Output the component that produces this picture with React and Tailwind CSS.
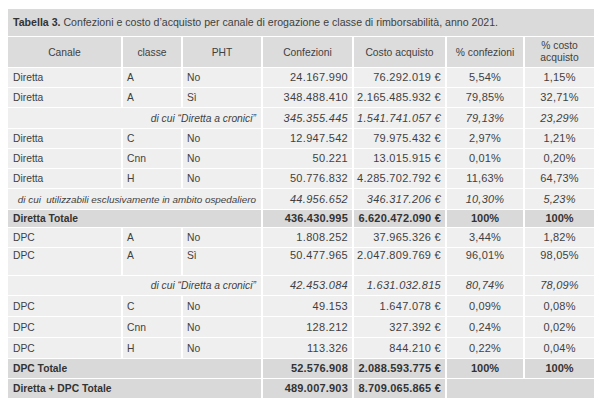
import React from "react";

const rows = [
  { type: "row", h: 19, c: ["Diretta", "A", "No", "24.167.990", "76.292.019 €", "5,54%", "1,15%"] },
  { type: "row", h: 19, c: ["Diretta", "A", "Sì", "348.488.410", "2.165.485.932 €", "79,85%", "32,71%"] },
  { type: "sub", h: 20, c: ["di cui \u201cDiretta a cronici\u201d", "345.355.445", "1.541.741.057 €", "79,13%", "23,29%"] },
  { type: "row", h: 19, c: ["Diretta", "C", "No", "12.947.542", "79.975.432 €", "2,97%", "1,21%"] },
  { type: "row", h: 19, c: ["Diretta", "Cnn", "No", "50.221", "13.015.915 €", "0,01%", "0,20%"] },
  { type: "row", h: 19, c: ["Diretta", "H", "No", "50.776.832", "4.285.702.792 €", "11,63%", "64,73%"] },
  { type: "sub", h: 20, small: true, c: ["di cui  utilizzabili esclusivamente in ambito ospedaliero", "44.956.652", "346.317.206 €", "10,30%", "5,23%"] },
  { type: "total", h: 17, c: ["Diretta Totale", "436.430.995", "6.620.472.090 €", "100%", "100%"] },
  { type: "row", h: 19, c: ["DPC", "A", "No", "1.808.252", "37.965.326 €", "3,44%", "1,82%"] },
  { type: "row", h: 27, top: true, c: ["DPC", "A", "Sì", "50.477.965", "2.047.809.769 €", "96,01%", "98,05%"] },
  { type: "sub", h: 19, c: ["di cui \u201cDiretta a cronici\u201d", "42.453.084", "1.631.032.815", "80,74%", "78,09%"] },
  { type: "row", h: 20, c: ["DPC", "C", "No", "49.153", "1.647.078 €", "0,09%", "0,08%"] },
  { type: "row", h: 20, c: ["DPC", "Cnn", "No", "128.212", "327.392 €", "0,24%", "0,02%"] },
  { type: "row", h: 20, c: ["DPC", "H", "No", "113.326", "844.210 €", "0,22%", "0,04%"] },
  { type: "total", h: 19, c: ["DPC Totale", "52.576.908", "2.088.593.775 €", "100%", "100%"] },
  { type: "grand", h: 19, c: ["Diretta + DPC Totale", "489.007.903", "8.709.065.865 €"] },
];

function DataRow({ row }) {
  const va = row.top ? "align-top pt-[1px]" : "align-middle";
  const cell = `bg-[#efefef] ${va}`;
  const num = `${cell} text-right pr-[4px] text-[11px] tracking-[0.3px]`;
  const pct = `${cell} text-center text-[11px] tracking-[0.2px]`;

  if (row.type === "row") {
    const [canale, classe, pht, conf, costo, pc, pcc] = row.c;
    return (
      <tr style={{ height: row.h }}>
        <td className={`${cell} pl-[5px]`}>{canale}</td>
        <td className={`${cell} pl-[4px]`}>{classe}</td>
        <td className={`${cell} pl-[4px]`}>{pht}</td>
        <td className={num}>{conf}</td>
        <td className={num}>{costo}</td>
        <td className={pct}>{pc}</td>
        <td className={pct}>{pcc}</td>
      </tr>
    );
  }

  if (row.type === "sub") {
    const [label, conf, costo, pc, pcc] = row.c;
    return (
      <tr style={{ height: row.h }} className="italic">
        <td
          colSpan={3}
          className={`${cell} text-right pr-[5px] whitespace-pre ${row.small ? "text-[9.9px]" : ""}`}
        >
          {label}
        </td>
        <td className={num}>{conf}</td>
        <td className={num}>{costo}</td>
        <td className={pct}>{pc}</td>
        <td className={pct}>{pcc}</td>
      </tr>
    );
  }

  const tot = "bg-[#d9d9d9] align-middle font-bold text-[#333]";
  const [label, conf, costo, pc, pcc] = row.c;
  return (
    <tr style={{ height: row.h }}>
      <td colSpan={3} className={`${tot} pl-[5px]`}>{label}</td>
      <td className={`${tot} text-right pr-[4px] text-[11px] tracking-[0.2px]`}>{conf}</td>
      <td className={`${tot} text-right pr-[4px] text-[11px] tracking-[0.2px]`}>{costo}</td>
      {row.type === "grand" ? (
        <td colSpan={2} className={tot}></td>
      ) : (
        <>
          <td className={`${tot} text-center text-[11px]`}>{pc}</td>
          <td className={`${tot} text-center text-[11px]`}>{pcc}</td>
        </>
      )}
    </tr>
  );
}

export default function App() {
  return (
    <div className="w-[610px] h-[415px] bg-white pl-[6px] pt-[8px] text-[10.3px] leading-[13px] text-[#3f3f3f] font-['Liberation_Sans',Arial,sans-serif]">
      <table className="w-[590px] table-fixed border-separate border-spacing-x-[2px] border-spacing-y-[1px]">
        <colgroup>
          <col style={{ width: 113 }} />
          <col style={{ width: 58 }} />
          <col style={{ width: 78 }} />
          <col style={{ width: 89 }} />
          <col style={{ width: 91 }} />
          <col style={{ width: 76 }} />
          <col style={{ width: 69 }} />
        </colgroup>
        <tbody>
          <tr className="h-[27px]">
            <td colSpan={7} className="bg-[#dadada] pl-[5px] align-middle text-[10.6px] whitespace-nowrap">
              <span className="font-bold text-[#333]">Tabella 3.</span> Confezioni e costo d’acquisto per canale di erogazione e classe di rimborsabilità, anno 2021.
            </td>
          </tr>
          <tr className="h-[30px] text-center">
            <td className="bg-[#dcdcdc]">Canale</td>
            <td className="bg-[#dcdcdc]">classe</td>
            <td className="bg-[#dcdcdc]">PHT</td>
            <td className="bg-[#dcdcdc]">Confezioni</td>
            <td className="bg-[#dcdcdc]">Costo acquisto</td>
            <td className="bg-[#dcdcdc]">% confezioni</td>
            <td className="bg-[#dcdcdc] leading-[12px]">% costo<br />acquisto</td>
          </tr>
          {rows.map((r, i) => (
            <DataRow key={i} row={r} />
          ))}
        </tbody>
      </table>
    </div>
  );
}
